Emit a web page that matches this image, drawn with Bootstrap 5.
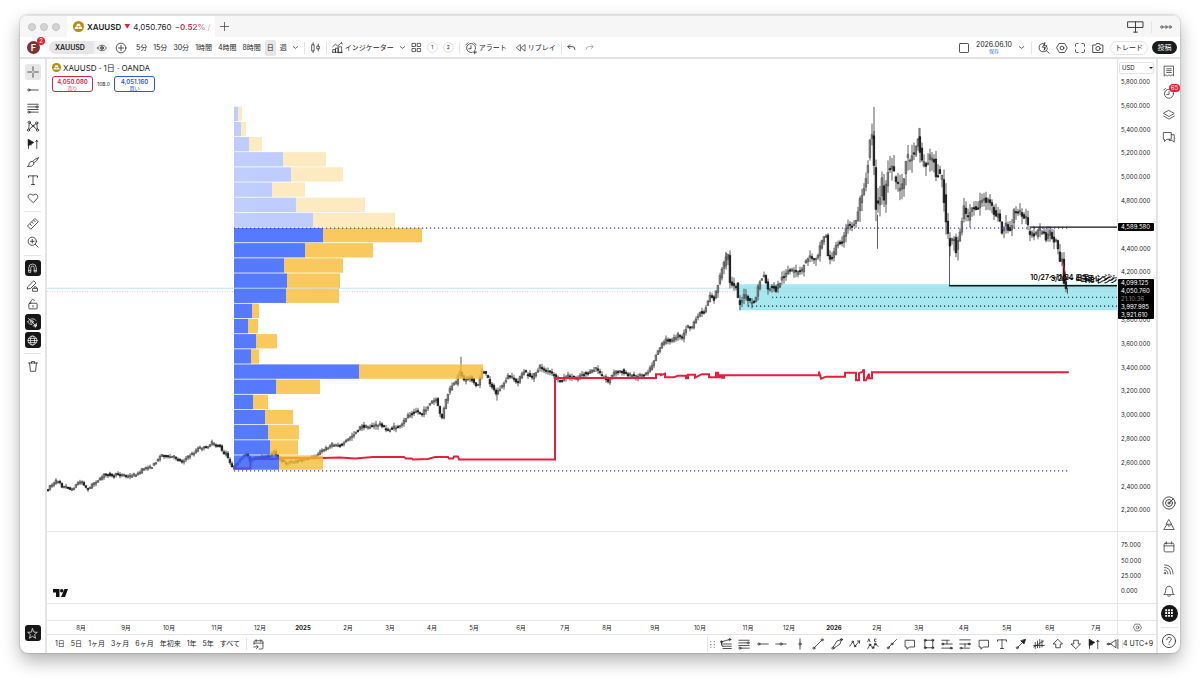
<!DOCTYPE html>
<html lang="ja">
<head>
<meta charset="utf-8">
<meta name="viewport" content="width=device-width, initial-scale=1">
<title>XAUUSD 4,050.760</title>
<link href="https://cdn.jsdelivr.net/npm/bootstrap@5.3.0/dist/css/bootstrap.min.css" rel="stylesheet">
<style>
:root{--line:#e4e4e6;--ink:#1c1c1e}
body{font-family:Inter,"Noto Sans CJK JP",sans-serif;font-size:7px;line-height:8px;color:var(--ink);background:#fff;padding:15px 20px 25px;min-height:100vh;display:flex}
button,select,input{font:inherit;color:inherit}
button{border:0;background:none;padding:0;white-space:nowrap}
svg{display:block;fill:none;stroke:currentColor;stroke-width:1;stroke-linejoin:round;stroke-linecap:round;overflow:visible}
.app-window{border-radius:8px;box-shadow:0 0 2px rgba(0,0,0,.35),0 8px 18px rgba(0,0,0,.3);background:#fff;overflow:hidden}
.title-strip{height:22px;background:#f6f6f6;border-top:1px solid #e2e2e2;color:#333}
.dot{width:8px;height:8px;border-radius:50%;background:#d4d4d4;border:1px solid #c4c4c4}
.tab-item{width:148px;height:22px;background:#fff;font-size:8px;gap:3px;padding-left:6px;margin-left:7px;white-space:nowrap;overflow:hidden;color:var(--ink)}
.tri{font-size:6px}
.gold{width:11px;height:11px;border-radius:50%;background:#bd8a10;color:#fff;flex:none}
.down{color:#e0213e}
.fade-end{background:linear-gradient(90deg,#e0213e 50%,#f6c4cc);-webkit-background-clip:text;background-clip:text;color:transparent}
.tool-strip{height:22px;border-bottom:2px solid #e2e2e2;padding:1px 3px 0 7px}
.vr-line{width:1px;height:12px;background:var(--line);flex:none}
.avatar{width:13px;height:13px;border-radius:50%;background:#7d3434;color:#fff;font-size:9px;font-weight:600;position:relative}
.note{position:absolute;background:#ed1c34;color:#fff;border-radius:5px;font-weight:400;font-size:6px;text-align:center;height:8px;line-height:8px;min-width:8px;top:-4px;right:-5px}
.symbol-pill{width:61px;height:13px;border-radius:7px;background:linear-gradient(90deg,#e6e6e6 72%,#f4f4f4 76%);padding:0 3px 0 6px}
.symbol-pill input{width:40px;border:0;background:none;padding:0;font-weight:600;outline:0;line-height:12px}
.on-day{background:#e6e6e6;border-radius:2px;padding:4px 2px;margin:0 -2px}
.round-num{width:11px;height:11px;border:1px solid #e2e2e2;border-radius:50%;font-size:5px;line-height:9px}
.trade{height:14px;border:1px solid var(--line);border-radius:7px;width:38px}
.post{height:13px;border-radius:7px;width:25px;background:#1b1b1b;color:#fff}
.save{color:#3167f5;font-size:5px;line-height:5px}
.left-rail{width:27px;border-right:2px solid #e4e4e4;padding:4px 0 11px}
.rail-btn{width:16px;height:16px;margin:1px 0;border-radius:3px}
.rail-btn.sel{background:#e6e6e6}
.rail-btn.inv{background:#171717;color:#fff}
.rail-sep{width:17px;height:1px;background:var(--line);margin:4px 0 3px}
.right-rail{width:24px;border-left:2px solid #e4e4e4;padding:1px 0}
.right-rail .rail-sep{margin:3px 0 2px}
.side-btn{width:20px;height:22px;position:relative;color:#333}
.side-btn .note{top:2px;right:-1px;width:11px}
.apps{width:17px;height:17px;border-radius:50%;background:#161616;color:#fff}
.pane{position:relative;min-height:0;border-bottom:1px solid var(--line)}
.p-main{flex:475 0 0}.p-sub{flex:71 0 0}.p-thin{flex:16 0 0}
.plot{position:absolute;inset:0;width:100%;height:100%;overflow:hidden}
.price-col{width:39px;border-left:1px solid var(--line);font-size:6px;color:#222}
.ticks{position:absolute;inset:0;padding:19px 0 17px 3px}
.ticks-sub{position:absolute;inset:0;padding:9px 0 8px 3px}
.p-tag{position:absolute;left:0;width:36px;background:#000;color:#fff;padding-left:3px;border-radius:1px}
.ccy{position:absolute;left:1px;top:3px;width:35px;height:12px;line-height:8px;border:1px solid var(--line);border-radius:2px;background:#fff;appearance:none;padding:0 2px;outline:0}
.caret{position:absolute;left:31px;top:8px;border:2px solid transparent;border-top-color:#222}
.legend-box{position:relative;padding:4px 5px}
.legend-name{font-size:8px;gap:2px;word-spacing:normal}
.quote{width:41px;height:16px;border:1px solid;border-radius:3px;font-size:6px;line-height:7px}
.quote b{display:block;font-weight:600}
.quote small{display:block;font-size:5px;line-height:6px}
.sell{color:#e0213e}.buy{color:#2d55e8}
.spread{font-size:5px;width:21px;text-align:center}
.zone-text{position:absolute;font-weight:600;white-space:nowrap;color:#000;line-height:8px}
.brand{position:absolute;left:6px;bottom:6px}
.time-row{height:14px;border-bottom:1px solid var(--line);font-size:6px;color:#222}
.tick-slot{display:flex;justify-content:flex-end;min-width:0}
.tick-slot span{width:0;display:flex;justify-content:center;white-space:nowrap}
.foot{height:18px}
.fav-strip{flex:0 1 415px;min-width:0;border-left:1px solid var(--line);border-radius:3px;overflow:hidden;height:18px}
.fav{width:18px;height:18px;flex:0 1 18px}
.utc{width:34px;font-size:7px;border-left:1px solid var(--line)}
.g5{gap:5px}.g6{gap:6px}.ic-gap{padding-right:2px}
</style>
</head>
<body>
<div class="app-window d-flex flex-column flex-grow-1">
  <header>
    <div class="title-strip d-flex align-items-center">
      <div class="d-flex ps-2 gap-1"><i class="dot"></i><i class="dot"></i><i class="dot"></i></div>
      <div class="tab-item d-flex align-items-center"><span class="gold" data-icon="gold" data-size="11"></span><b class="fw-semibold">XAUUSD</b><span class="down tri">▼</span><span>4,050.760</span><span class="fade-end fw-semibold">−0.52% /</span></div>
      <button class="ms-1" aria-label="新しいタブ" data-icon="plus" data-size="11"></button>
      <div class="ms-auto d-flex align-items-center gap-2 pe-2"><button aria-label="レイアウト" data-icon="panes" data-size="15"></button><i class="vr-line"></i><button aria-label="メニュー" data-icon="dots" data-size="12"></button></div>
    </div>
    <div class="tool-strip d-flex align-items-center">
      <div class="d-flex align-items-center g5">
        <div class="avatar d-flex align-items-center justify-content-center">F<span class="note">2</span></div>
        <div class="symbol-pill d-flex align-items-center justify-content-between ms-1"><input aria-label="シンボル" value="XAUUSD"><span data-icon="eye" data-size="10"></span></div>
        <button aria-label="比較" data-icon="pluscircle" data-size="12" class="pe-1"></button>
        <div class="d-flex align-items-center g6"><button>5分</button><button>15分</button><button>30分</button><button>1時間</button><button>4時間</button><button>8時間</button><button class="on-day">日</button><button>週</button></div>
        <button aria-label="時間足" data-icon="chev" data-size="7"></button>
        <i class="vr-line"></i>
        <button aria-label="チャートタイプ" data-icon="candles" data-size="11"></button>
        <i class="vr-line"></i>
        <button class="d-flex align-items-center"><span data-icon="indic" data-size="11" class="ic-gap"></span>インジケーター</button>
        <button aria-label="一覧" data-icon="chev" data-size="7"></button>
        <button aria-label="テンプレート" data-icon="grid" data-size="11"></button>
        <button class="round-num">1</button><button class="round-num">2</button>
        <i class="vr-line"></i>
        <button class="d-flex align-items-center"><span data-icon="alarm" data-size="12" class="ic-gap"></span>アラート</button>
        <button class="d-flex align-items-center ms-1"><span data-icon="replay" data-size="10" class="ic-gap"></span>リプレイ</button>
        <i class="vr-line"></i>
        <button aria-label="元に戻す" data-icon="undo" data-size="9"></button>
        <button aria-label="やり直す" class="ms-1 text-secondary" data-icon="redo" data-size="9"></button>
      </div>
      <div class="ms-auto d-flex align-items-center g6">
        <button aria-label="レイアウト選択" data-icon="square" data-size="12"></button>
        <button>2026.06.10<span class="d-block save">保存</span></button>
        <button aria-label="レイアウト一覧" data-icon="chev" data-size="7"></button>
        <i class="vr-line"></i>
        <button aria-label="検索" data-icon="quick" data-size="12"></button>
        <button aria-label="設定" data-icon="hex" data-size="12"></button>
        <button aria-label="全画面" data-icon="full" data-size="12"></button>
        <button aria-label="スナップショット" data-icon="camera" data-size="12"></button>
        <div class="d-flex align-items-center gap-1"><button class="trade">トレード</button><button class="post">投稿</button></div>
      </div>
    </div>
  </header>
  <div class="d-flex flex-grow-1">
    <nav class="left-rail d-flex flex-column align-items-center flex-shrink-0" id="leftRail" aria-label="描画ツール"></nav>
    <main class="flex-grow-1 d-flex flex-column" style="min-width:0">
      <div class="d-flex flex-grow-1">
        <div class="d-flex flex-column flex-grow-1" style="min-width:0">
          <section class="pane p-main overflow-hidden">
            <svg class="plot" id="plot" viewBox="47 59 1070 473" preserveAspectRatio="none" aria-label="XAUUSD 日足チャート"></svg>
            <div class="legend-box">
              <div class="legend-name d-flex align-items-center"><span class="gold" data-icon="gold" data-size="9" style="width:9px;height:9px"></span>XAUUSD · 1日 · OANDA</div>
              <div class="d-flex align-items-center mt-1"><button class="quote sell"><b>4,050.080</b><small>売り</small></button><span class="spread">108.0</span><button class="quote buy"><b>4,051.160</b><small>買い</small></button></div>
            </div>
            <div class="zone-text" style="left:91.9%;top:45.6%">10/27〜11/24 日足レンジ</div>
            <div class="zone-text" style="left:93.8%;top:45.8%">3/20〜 4日足レンジ</div>
            <div class="zone-text" style="left:97%;top:46.2%">H8 レンジ</div>
          </section>
          <section class="pane p-sub"><svg class="brand" width="15" height="8" viewBox="0 0 30 16" role="img" aria-label="TV"><path fill="#111" stroke="none" d="M0 0h13v16H6V7H0zM23 0h7l-6 16h-8z"/><circle cx="17.500" cy="3.500" r="3.500" fill="#111" stroke="none"/></svg></section>
          <section class="pane p-thin"></section>
        </div>
        <aside class="price-col d-flex flex-column flex-shrink-0">
          <div class="pane p-main">
            <div class="ticks d-flex flex-column justify-content-between" id="priceTicks"></div>
            <select class="ccy" aria-label="通貨"><option>USD</option></select><i class="caret"></i>
            <div class="p-tag" style="top:34.7%">4,589.580</div>
            <div class="p-tag" style="top:46.5%">4,099.125<br>4,050.760<br><span class="text-white-50">21:10:36</span><br>3,997.985<br>3,921.610</div>
          </div>
          <div class="pane p-sub"><div class="ticks-sub d-flex flex-column justify-content-between"><span>75.000</span><span>50.000</span><span>25.000</span><span>0.000</span></div></div>
          <div class="pane p-thin"></div>
        </aside>
      </div>
      <div class="time-row d-flex align-items-center">
        <div class="d-flex flex-grow-1 overflow-hidden" id="timeTicks"></div>
        <button class="price-col d-flex justify-content-center align-items-center flex-shrink-0 h-100" aria-label="軸の設定" data-icon="hex" data-size="9"></button>
      </div>
      <div class="foot d-flex align-items-center">
        <div class="d-flex align-items-center g6 ps-2 flex-shrink-0">
          <button>1日</button><button>5日</button><button>1ヶ月</button><button>3ヶ月</button><button>6ヶ月</button><button>年初来</button><button>1年</button><button>5年</button><button>すべて</button><i class="vr-line"></i><button aria-label="日付へ移動" data-icon="goto" data-size="11"></button>
        </div>
        <div class="fav-strip d-flex align-items-center ms-auto"><span data-icon="grip" data-size="9"></span><div class="d-flex justify-content-between flex-grow-1" id="favs"></div></div>
        <button class="utc text-start">4 UTC+9</button>
      </div>
    </main>
    <aside class="right-rail d-flex flex-column align-items-center flex-shrink-0" id="rightRail" aria-label="サイドバー"></aside>
  </div>
</div>
<script src="https://cdn.jsdelivr.net/npm/bootstrap@5.3.0/dist/js/bootstrap.bundle.min.js"></script>
<script>
// Icon shapes, all on a 16 x 16 grid
const shapes = {
  gold:'<path fill="#fff" stroke="none" d="M6 4h4l1.500 3.500h-7zM3.500 8.500h4l.5 3H2.500zM8.600 8.500h4l1 3H8.100z"/>',
  plus:'<path d="M8 2v12M2 8h12"/>', panes:'<path d="M0 3h16v6H0zM8 3v11M6 14h4"/>',
  dots:'<circle cx="2.500" cy="8" r="1.600"/><circle cx="8" cy="8" r="1.600"/><circle cx="13.500" cy="8" r="1.600"/>',
  eye:'<path d="M1 8c3-6 11-6 14 0-3 6-11 6-14 0z"/><circle cx="8" cy="8" r="2.500"/><path d="M8 6.500v3M6.500 8h3"/>',
  pluscircle:'<circle cx="8" cy="8" r="6.500"/><path d="M8 4.500v7M4.500 8h7"/>',
  chev:'<path stroke-width="1.500" d="M3 6l5 4 5-4"/>',
  candles:'<path d="M3 4h3v9H3zM4.500 1v3M4.500 13v2.500M10.500 6h3v4h-3zM12 3v3M12 10v3"/>',
  indic:'<path d="M1 7l4-4 3 3 6-5M14 1l1 2M1 15V11h4v4M5 15V9h4v6M9 15V7h5v8zM1 15h14"/>',
  grid:'<path d="M2 2h4.500v4.500H2zM9.500 2H14v4.500H9.500zM2 9.500h4.500V14H2zM9.500 9.500H14V14H9.500z"/>',
  alarm:'<path d="M14 9.500A6 6 0 1 0 9 14M8 5v4H5M1 4l3-3M15 4l-3-3M13 11v5M10.500 13.500h5"/>',
  replay:'<path d="M7 3v10L1 8zM14.500 3v10l-6-5z"/>',
  undo:'<path stroke-width="1.400" d="M5 3L1.500 6.500 5 10M2 6.500h8q4 0 4 5"/>',
  redo:'<path d="M11 3l3.500 3.500L11 10M14 6.500H6q-4 0-4 5"/>',
  square:'<rect x="2" y="2" width="12" height="12" rx="1"/>',
  quick:'<path d="M7 2a5.500 5.500 0 1 0 5.500 6M11 11.500l4 3.500M9 1L6 7h3l-1 4 4-6H9z"/>',
  hex:'<path d="M4.500 2h7L15 8l-3.500 6h-7L1 8z"/><circle cx="8" cy="8" r="2.500"/>',
  full:'<path d="M2 5.500V3.500Q2 2 3.500 2h2M10.500 2h2Q14 2 14 3.500v2M14 10.500v2q0 1.500-1.500 1.500h-2M5.500 14h-2Q2 14 2 12.500v-2"/>',
  camera:'<path d="M1.500 4H5l1-2h4l1 2h3.500v10h-13z"/><circle cx="8" cy="8.700" r="2.800"/>',
  cross:'<path d="M8 1v5M8 10v5M1 8h5M10 8h5M8 8h.1"/>',
  hline:'<circle cx="2.500" cy="8" r="1.400"/><path d="M4 8h11"/>',
  fib:'<path d="M1 3h14M1 6.500h11M1 10h14M4 13.500h11"/><circle cx="13.500" cy="6.500" r="1.400"/><circle cx="2.500" cy="13.500" r="1.400"/>',
  pattern:'<circle cx="3" cy="3" r="1.500"/><circle cx="13" cy="4" r="1.500"/><circle cx="2" cy="13.500" r="1.500"/><circle cx="14" cy="13.500" r="1.500"/><circle cx="8" cy="8" r="1.200"/><path d="M3 4.500L2.300 12M4 4l3 3M12 5L9 7M13.200 5.500l.6 6.500M3 12.500L7 9M13 12.500L9 9"/>',
  forecast:'<path d="M2 2v12M2 9h4M13 3v11M11.500 5L13 3l1.500 2"/><path fill="currentColor" d="M2 2l7 4-7 4z"/>',
  brush:'<path d="M1 14q2-1 2-4 1-3 4-3 3 1 2 4-2 4-8 3zM8 7l3-3M9.500 9q4-2 6-7-2 2-4 2"/>',
  text:'<path d="M2 4.500V2.500h12v2M8 2.500v11.500M6 14h4"/>',
  heart:'<path d="M8 14L2.300 8.500C-.5 5 4 .5 8 4.500c4-4 8.500.5 5.700 4z"/>',
  ruler:'<path d="M11 1l4 4L5 15l-4-4zM9 3l2 2M6.500 5.500l1.500 1.500M4 8l2 2"/>',
  zoom:'<circle cx="7" cy="7" r="5.500"/><path d="M7 4.500v5M4.500 7h5M11 11l4 4"/>',
  magnet:'<path d="M2.500 13V7a5.500 5.500 0 0 1 11 0v6h-3V7a2.500 2.500 0 0 0-5 0v6zM2.500 11h3M10.500 11h3"/>',
  penlock:'<path d="M1 9L9 1l3 3-7 7-4 1zM8 11h6v4H8zM9.500 11V9.500q1.500-2 3 0V11"/>',
  lock:'<rect x="2.500" y="7" width="11" height="7.500" rx="1"/><path d="M5 7V4q2-4 5-1M8 10v2"/>',
  hide:'<path d="M1 7c3-5 9-6 12-2M1 7c1 2 3 4 6 4M2 2l9 9M14 9l-2 6M9 13h5"/><circle cx="7" cy="7" r="2"/><circle cx="12" cy="12" r="1.500"/>',
  globe:'<circle cx="8" cy="8" r="6.500"/><ellipse cx="8" cy="8" rx="3" ry="6.500"/><path d="M1.500 8h13M2.500 5h11M2.500 11h11"/>',
  trash:'<path d="M2 4h12M6 4V2h4v2M3.500 4l1 11h7l1-11"/>',
  star:'<path d="M8 1l2 5 5 .3-4 3.300L12.500 15 8 12l-4.500 3L5 9.600 1 6.300 6 6z"/>',
  list:'<path d="M2 1.500h12v13l-2-1.500-2 1.500L8 13l-2 1.500L4 13l-2 1.500zM5 5h6M5 7.500h6M5 10h6"/>',
  clock:'<circle cx="8" cy="9" r="6"/><path d="M8 6v4H5M1 4l2-2"/>',
  layers:'<path d="M8 2l7 4-7 4-7-4zM1 9.500l7 4 7-4"/>',
  chat:'<path d="M1 2h10v9H5l-3 3v-3H1zM11 5h4v10l-3-2.500H8V11"/>',
  radar:'<circle cx="8" cy="8" r="7"/><circle cx="8" cy="8" r="4"/><circle cx="8" cy="8" r="1.200"/><path d="M8 8l5-5"/>',
  pine:'<path d="M8 1l3.500 6h-7zM3.500 10L1 14h14l-2.500-4M3 10l3-3 2 3 3-3 2 3"/>',
  cal:'<rect x="1.500" y="3" width="13" height="11.500" rx="1.500"/><path d="M1.500 6.500h13M4.500 1v3M11.500 1v3"/>',
  rss:'<path d="M2 2.500q11 0 11.500 12M2 6q8 0 8 8.500M2 9.500q4.500 0 4.500 5"/><circle cx="2.500" cy="13.500" r="1"/>',
  bell:'<path d="M1.500 12.500q2-1 2-5c0-8 9-8 9 0q0 4 2 5zM6 14.500q2 1.500 4 0"/>',
  nine:'<path fill="currentColor" stroke="none" d="M3 3h2.500v2.500H3zM6.800 3h2.500v2.500H6.800zM10.600 3h2.500v2.500h-2.500zM3 6.800h2.500v2.500H3zM6.800 6.800h2.500v2.500H6.800zM10.600 6.800h2.500v2.500h-2.500zM3 10.600h2.500v2.500H3zM6.800 10.600h2.500v2.500H6.800zM10.600 10.600h2.500v2.500h-2.500z"/>',
  help:'<circle cx="8" cy="8" r="7.500"/><path d="M5.500 6.500c0-4 5.500-3.500 5 0-.3 1.500-2.500 1.500-2.500 3.500M8 12v.2"/>',
  goto:'<path d="M1.500 8V4Q1.500 2.500 3 2.500h10q1.500 0 1.500 1.500v9q0 1.500-1.500 1.500H9M1.500 6h13M4.500 1v3M11.500 1v3M1 11.500h6M5 9l2.500 2.500L5 14"/>',
  grip:'<path stroke-width="1.400" d="M5 3h.1M11 3h.1M5 8h.1M11 8h.1M5 13h.1M11 13h.1"/>',
  fibfan:'<path d="M2 5l11-3M2 8h13M4 11h11M4 14h11M2 5v4q0 2 2 2"/><circle cx="2" cy="5" r="1.300"/><circle cx="13" cy="2" r="1.300"/>',
  hmid:'<circle cx="8" cy="8" r="1.500"/><path d="M1 8h5.500M9.500 8H15"/>',
  vmid:'<circle cx="8" cy="8" r="1.500"/><path d="M8 1v5.500M8 9.500V15"/>',
  trend:'<circle cx="2.500" cy="13.500" r="1.400"/><circle cx="13.500" cy="2.500" r="1.400"/><path d="M3.500 12.500l9-9"/>',
  wedge:'<circle cx="2.500" cy="13.500" r="1.400"/><path d="M3 12L8 4l6-2-2 6-8 5.500"/><circle cx="14" cy="2" r="1.300"/>',
  zig:'<path d="M1 11l4-6 3 6 6-7M14 4h-3M14 4v3"/><circle cx="5" cy="5" r="1"/><circle cx="8" cy="11" r="1"/>',
  abc:'<path d="M1 14l3-5 4 4 3-5 4 3M1 5l1.500-4L4 5M12 1.500h-2v3h2"/><circle cx="4" cy="9" r="1.200"/><circle cx="8" cy="13" r="1.200"/><circle cx="11" cy="8" r="1.200"/>',
  ray:'<circle cx="3" cy="13" r="1.300"/><circle cx="8" cy="8" r="1.300"/><path d="M4 12l3-3M9 7l5-5"/>',
  note:'<path d="M2 3h12v9H7l-3 3v-3H2z"/>',
  rect:'<path d="M3 3h10v10H3z"/><circle cx="3" cy="3" r="1.300"/><circle cx="13" cy="3" r="1.300"/><circle cx="3" cy="13" r="1.300"/><circle cx="13" cy="13" r="1.300"/>',
  longp:'<path d="M1 3h10M1 8h14M1 13.500h14M8 4v4"/><circle cx="2.500" cy="8" r="1.200"/><circle cx="13.500" cy="13.500" r="1.200"/>',
  shortp:'<path d="M1 2.500h14M1 8h14M4 13.500h10M8 8v4"/><circle cx="2.500" cy="13.500" r="1.200"/><circle cx="13.500" cy="8" r="1.200"/>',
  arrow:'<circle cx="3" cy="13" r="1.300"/><path d="M4 12l9-9"/><path fill="currentColor" d="M14 2l-2 6-4-4z"/>',
  bars:'<path d="M1 10h14M3 6v8M6 4v9M9 2v11M12 3v9M1 12L14 4"/>',
  up:'<path d="M8 2l6 6h-3v5H5V8H2z"/>', dn:'<path d="M8 14l6-6h-3V3H5v5H2z"/>',
  rew:'<path d="M0 8h5M12 3v10L5 8zM14.500 2v12"/><circle cx="2" cy="8" r="1.200"/>'
};
const svgFor = (n, s) => `<svg width="${s}" height="${s}" viewBox="0 0 16 16" aria-hidden="true">${shapes[n]}</svg>`;
const centre = 'd-flex align-items-center justify-content-center flex-shrink-0';

leftRail.innerHTML = 'cross:sel hline fib pattern forecast brush text heart | ruler zoom | magnet:inv penlock lock hide:inv globe:inv | trash'.split(' ')
  .map(t => { if (t === '|') return '<i class="rail-sep flex-shrink-0"></i>'; const [n, c=''] = t.split(':');
    return `<button class="rail-btn ${c} ${centre}" aria-label="${n}">${svgFor(n, c === 'inv' ? 11 : 12)}</button>`; }).join('')
  + `<button class="rail-btn inv mt-auto ${centre}" aria-label="star">${svgFor('star', 11)}</button>`;

rightRail.innerHTML = 'list clock layers chat * radar pine cal rss bell nine | help'.split(' ').map(n =>
  n === '*' ? '<i class="mt-auto"></i>' : n === '|' ? '<i class="rail-sep flex-shrink-0"></i>' :
  n === 'nine' ? `<button class="side-btn ${centre}" aria-label="apps"><span class="apps ${centre}">${svgFor(n, 12)}</span></button>` :
  `<button class="side-btn ${centre}" aria-label="${n}">${svgFor(n, n === 'help' || n === 'radar' ? 14 : 12)}${n === 'clock' ? '<span class="note">65</span>' : ''}</button>`).join('');

favs.innerHTML = 'fibfan fib hline hmid vmid trend wedge zig abc ray note rect longp shortp note text arrow bars up dn forecast rew'.split(' ')
  .map(n => `<button class="fav ${centre}" aria-label="${n}">${svgFor(n, 12)}</button>`).join('');

document.querySelectorAll('[data-icon]').forEach(e => e.innerHTML = svgFor(e.dataset.icon, e.dataset.size));

// Axes
for (let p = 5800; p >= 2200; p -= 200) priceTicks.insertAdjacentHTML('beforeend', `<span class="${p === 4600 || p === 4000 ? 'invisible' : ''}">${p.toLocaleString('en-US')}.000</span>`);
const months = [[81,'8月'],[126,'9月'],[169,'10月'],[217,'11月'],[260,'12月'],[303,'2025'],[348,'2月'],[390,'3月'],[432,'4月'],[474,'5月'],[521,'6月'],[565,'7月'],[607,'8月'],[655,'9月'],[700,'10月'],[748,'11月'],[789,'12月'],[834,'2026'],[877,'2月'],[919,'3月'],[964,'4月'],[1007,'5月'],[1050,'6月'],[1096,'7月']];
let from = 47;
months.forEach(([x, t]) => { timeTicks.insertAdjacentHTML('beforeend', `<div class="tick-slot" style="flex:${x - from} 0 0"><span class="${t.length === 4 ? 'fw-bold' : ''}">${t}</span></div>`); from = x; });
timeTicks.insertAdjacentHTML('beforeend', `<div style="flex:${1117 - from} 0 0"></div>`);

// Price path, as x,y pairs
const path = `48,491 51,486 54,485 58,480 62,484 63,487 68,487 72,491 76,487 79,483 83,482 86,488 90,489 95,483 100,481 105,475 110,474 113,477 118,474 125,475 128,477 135,475 140,474 143,470 148,467 152,468 157,462 160,458 163,455 168,457 175,457 179,460 183,462 188,458 195,453 200,448 207,448 213,443 218,446 222,447 224,456 227,453 230,462 234,468 240,462 248,453 250,461 257,458 270,457 275,451 278,457 285,463 293,462 305,460 317,456 323,451 333,445 343,445 353,436 362,427 372,427 382,424 388,432 393,428 402,427 408,416 417,411 423,414 432,403 437,400 440,411 443,418 448,396 453,386 457,383 461,371 465,381 470,376 475,383 478,388 483,371 487,375 492,385 497,394 502,388 510,375 518,383 525,372 533,378 541,367 547,371 553,374 557,379 562,382 567,376 577,379 583,374 590,374 597,368 603,376 609,382 615,373 623,371 628,375 638,377 647,373 652,368 658,352 667,340 673,341 679,335 683,339 688,326 693,328 700,313 705,313 711,295 715,300 720,280 725,264 729,254 731,284 737,285 740,305 746,295 752,305 757,298 760,283 765,275 768,288 773,288 777,290 782,280 788,271 795,272 802,273 808,258 818,257 823,240 827,235 829,256 833,260 838,243 844,241 848,226 855,225 857,220 863,191 868,173 872,128 874,135 876,192 878,218 880,198 883,182 885,202 888,175 892,168 897,182 901,192 905,175 908,155 913,158 919,135 922,160 927,165 933,155 937,172 943,178 946,208 948,235 952,250 954,235 957,250 962,225 965,208 968,220 973,207 978,210 983,198 990,203 995,213 1000,217 1003,232 1007,223 1011,233 1015,213 1022,212 1027,218 1030,233 1035,237 1042,230 1047,240 1050,232 1057,242 1060,257 1063,262 1065,285 1067,292`.split(' ').map(p => p.split(',').map(Number));
const at = x => { let i = 1; while (i < path.length - 1 && path[i][0] < x) i++; const [a, b] = [path[i-1], path[i]]; return a[1] + (b[1] - a[1]) * Math.max(0, Math.min(1, (x - a[0]) / (b[0] - a[0]))); };
let seed = 7; const rnd = () => (seed = seed * 16807 % 2147483647) / 2147483647;
let wicks = '', dark = '', pale = '';
for (let x = 48; x < 1067; x += 2) {
  const v = x < 350 ? 4 : x < 650 ? 6 : x < 715 ? 6 : x < 860 ? 10 : x < 960 ? 22 : 14;
  let o = at(x - 1) + (rnd() - .5) * v * .5, c = at(x + 1) + (rnd() - .5) * v * .5;
  const top = Math.min(o, c), h = Math.max(1.5, Math.abs(c - o));
  wicks += `M${x} ${(top - rnd() * v * .6).toFixed(1)}V${(top + h + rnd() * v * .6).toFixed(1)}`;
  const body = `M${x - .7} ${top.toFixed(1)}h1.4v${h.toFixed(1)}h-1.4z`;
  if (c > o) dark += body; else pale += body;
}
wicks += 'M461 357V372M874 107V140M877.500 215V249M919 128V140M949.500 240V286M497 390V401M726 252V262M1067.500 288V294';

// Volume profile rows: buy end, total end
const rows = [[4,8],[7,12],[15,28],[49,92],[57,109],[38,71],[62,131],[79,161],[89,188],[71,139],[50,109],[53,106],[52,105],[18,25],[14,24],[22,43],[17,25],[125,249],[42,86],[19,34],[31,59],[34,65],[36,64],[45,89]];
const step = (471 - 106.7) / rows.length;
const bars = rows.map(([b, t], i) => { const y = 106.7 + i * step, o = i < 8 ? .3 : .8, h = step - .8;
  return `<g stroke="none" opacity="${o}"><rect x="234" y="${y}" width="${b}" height="${h}" fill="#2c59ff"/><rect x="${234 + b}" y="${y}" width="${t - b}" height="${h}" fill="#f9bc35"/></g>`; }).join('');

plot.innerHTML = `
 <rect x="739" y="284.500" width="378" height="26" fill="#a6e8ef" stroke="none"/>
 <path d="M47 288.500H1117" stroke="#9fd9e6" stroke-width=".7"/><path d="M47 291.700H1117" stroke="#dcb9bd" stroke-width=".7" stroke-dasharray="1 1.500" stroke-linecap="butt"/>
 <path d="M772 297.500H1117M748 306.500H1117" stroke="#123" stroke-width="1.200" stroke-dasharray="1.200 2.800" stroke-linecap="butt"/>
 <path d="${wicks}" stroke="#333" stroke-width=".8" stroke-linecap="butt"/>
 <path d="${pale}" fill="#777" stroke="#333" stroke-width=".4"/><path d="${dark}" fill="#000" stroke="#000" stroke-width=".4"/>
 <path d="M1062.500 262l3 12v7" stroke="#c2202f"/>
 <path stroke="#e6203c" stroke-width="2" stroke-linejoin="miter" d="M234 469H250.500V460L257 459.500H275L280 458.500H323L340 458L355 459L373 457.500H404L406 459H412L413 460L428 459.500L435 457.500H448L449 459H453L454 457H458L459 460H555V378.300H656V374.500H661V375.500L665 374V377.500H674L678 376H686V378.500H688V375H695V378L702 374.500H709V377.500H716V373H718V377.500H720V375.500H722V378H724V375.500H819V372L821 379L826 377H845V373H856V380.500H859V373.500L863 372V370.500H864V380.500H866L869 374V378.500H872V372.500H1068"/>
 ${bars}
 <path d="M234 228.300H1068M234 471.300H1068" stroke="#3a45c8" stroke-width="1.200" stroke-dasharray="1.200 2.800" stroke-linecap="butt"/>
 <path d="M1031 227.300H1117M949.500 286H1117" stroke="#111" stroke-width="1.300"/>`;
</script>
</body>
</html>
